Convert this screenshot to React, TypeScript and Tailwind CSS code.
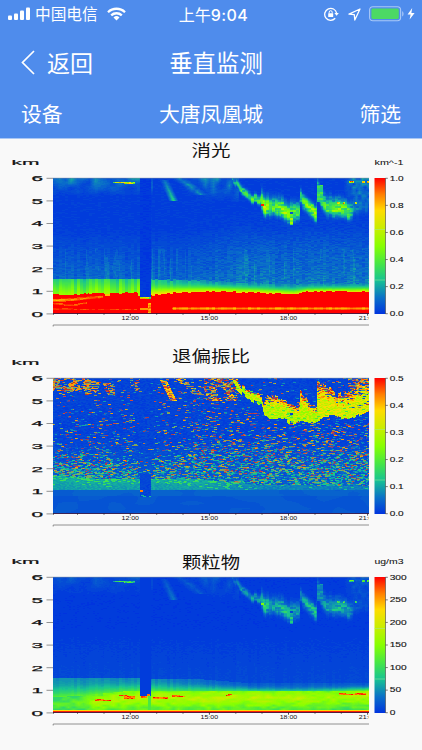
import { useMemo } from 'react'

type Kind = 'extinction' | 'depol' | 'particle'

type ChartProps = {
  kind: Kind
  title: string
  titleY: number
  titleWidth: number
  unit?: string
  ticks: string[]
  height: number
}

const PLOT_X = 53
const PLOT_Y = 39
const PLOT_W = 316
const PLOT_H = 136
const LEVELS = 64

// blue -> teal -> green -> yellow -> red
const STOPS: [number, number[]][] = [
  [0, [0, 52, 222]],
  [0.12, [10, 112, 200]],
  [0.25, [24, 196, 145]],
  [0.37, [70, 230, 70]],
  [0.5, [135, 255, 0]],
  [0.63, [200, 238, 0]],
  [0.76, [255, 220, 0]],
  [0.88, [255, 125, 0]],
  [1, [255, 0, 0]],
]

// averaged colours of isolated noisy samples, returned by a field as 2 + index
const MUTED = ['#4a48a8', '#7c4482', '#a93a4c', '#d0483a', '#b97a42', '#8a9a50', '#6fb268', '#3f9f8c', '#d8a030', '#c8341c']
const muted = (i: number) => 2 + i

function color(v: number) {
  const c = Math.max(0, Math.min(1, v))
  let i = 1
  while (i < STOPS.length - 1 && STOPS[i][0] < c) i++
  const [a, ca] = STOPS[i - 1]
  const [b, cb] = STOPS[i]
  const k = (c - a) / (b - a)
  return `rgb(${ca.map((n, j) => Math.round(n + (cb[j] - n) * k)).join(',')})`
}

function rnd(x: number, y: number, seed: number) {
  let h = (x * 374761393 + y * 668265263 + seed * 982451653) | 0
  h = Math.imul(h ^ (h >>> 13), 1274126177)
  h = Math.imul(h ^ (h >>> 16), 2246822519)
  return ((h ^ (h >>> 14)) >>> 0) / 4294967296
}

function smooth(x: number, y: number, seed: number) {
  const xi = Math.floor(x)
  const yi = Math.floor(y)
  const fx = x - xi
  const fy = y - yi
  const a = rnd(xi, yi, seed) * (1 - fx) + rnd(xi + 1, yi, seed) * fx
  const b = rnd(xi, yi + 1, seed) * (1 - fx) + rnd(xi + 1, yi + 1, seed) * fx
  return a * (1 - fy) + b * fy
}

function lerp(points: number[][], x: number) {
  if (x <= points[0][0]) return points[0][1]
  for (let i = 1; i < points.length; i++) {
    if (x <= points[i][0]) {
      const [x0, y0] = points[i - 1]
      const [x1, y1] = points[i]
      return y0 + ((y1 - y0) * (x - x0)) / (x1 - x0 || 1)
    }
  }
  return points[points.length - 1][1]
}

const CLOUD_TOP = [[179, 0], [184, 2], [188, 8], [198, 13], [208, 17], [210, 24], [214, 16], [224, 20], [234, 25], [246, 27], [247, 14], [257, 24], [263, 29], [264, 3], [273, 8], [284, 17], [298, 13], [306, 3], [316, 0]]
const CLOUD_BOTTOM = [[179, 2], [183, 10], [194, 20], [208, 27], [211, 35], [215, 39], [224, 39], [233, 42], [240, 46], [247, 42], [262, 44], [264, 42], [269, 39], [282, 38], [296, 41], [304, 36], [316, 32]]
// bright core of the cloud: centre line and strength
const CORE = [[179, 0], [182, 4], [188, 13], [198, 20], [206, 22], [213, 30], [220, 27], [230, 34], [238, 35], [246, 35], [247, 19], [255, 27], [263, 34], [264, 12], [268, 23], [273, 29], [281, 31], [296, 33], [304, 30], [316, 26]]
const CORE_GAIN = [[179, 0.18], [188, 0.36], [205, 0.44], [211, 0.62], [220, 0.4], [230, 0.56], [245, 0.4], [248, 0.34], [262, 0.66], [264, 0.3], [272, 0.4], [282, 0.5], [295, 0.44], [301, 0.16], [316, 0.1]]

function streak(x: number, y: number, x0: number, y0: number, x1: number, y1: number, w: number) {
  if (y < y0 || y > y1) return 0
  const cx = x0 + ((x1 - x0) * (y - y0)) / (y1 - y0)
  return Math.max(0, 1 - Math.abs(x - cx) / w)
}

const inGap = (x: number) => x >= 87 && x < 98

function cloudCore(x: number, y: number) {
  if (x < 179) return 0
  const col = Math.floor(x / 3)
  const row = Math.floor(y / 2)
  const q = rnd(col, row, 9)
  if (x >= 208 && x < 211 && row === 13) return 0.97
  if (x >= 237 && x < 240 && (y === 34 || y === 35)) return 0.06
  if (x >= 237 && x < 240 && y > 39 && y < 47) return 0.38 + q * 0.25
  const c = lerp(CORE, x) + (rnd(col, 1, 8) - 0.5) * 4
  const w = y < c ? (x < 208 ? 5 : x > 246 && x < 263 ? 7 : 11) : x < 208 ? 4 : 8
  const d = Math.abs(y - c) / w
  const body = Math.exp(-d * d * 1.3) * lerp(CORE_GAIN, x)
  const v = body * (0.62 + 0.6 * q)
  // right after 19:00 the cloud reappears at a sharp edge
  if (x >= 264 && x < 270 && y > 6 && y < 24) return Math.max(v, 0.24 + q * 0.14)
  return v
}

function upperHaze(x: number, y: number) {
  let v = 0
  if (x < 100) v += 0.13 * Math.max(0, 1 - y / 18) * smooth(x / 6, y / 5, 2) * 1.5
  if (x > 130 && x < 186) v += 0.15 * Math.min(1, (x - 130) / 30) * Math.max(0, 1 - y / 25) * smooth(x / 4, y / 7, 3) * 1.5
  if (x > 290) v += 0.26 * Math.min(1, (x - 290) / 12) * Math.max(0, 1 - y / 38) * smooth(x / 3, y / 3, 4)
  v += streak(x, y, 111, 2, 120, 22, 5) * (0.08 + y / 110)
  v += streak(x, y, 126, 0, 147, 16, 8) * 0.11 * (0.6 + smooth(x / 3, y / 2, 41))
  return v
}

function sparks(x: number, y: number) {
  if (y >= 4 && y < 6 && x >= 60 && x < 82) return y < 5 || x > 70 ? 0.3 + rnd(Math.floor(x / 2), y, 4) * 0.6 : 0
  if (y >= 3 && y < 5 && ((x >= 296 && x < 301) || (x > 308 && x < 312) || x > 313)) return 0.4 + rnd(x, y, 5) * 0.6
  if (y >= 24 && y < 26 && ((x > 283 && x < 287) || (x > 289 && x < 292) || (x > 301 && x < 304))) return 0.35 + rnd(x, y, 6) * 0.6
  return 0
}

function extinction(x: number, y: number) {
  const col = Math.floor(x / 3)
  const n = rnd(Math.floor(x / 3), y, 11)
  const stripe = rnd(col, 0, 12)
  const gap = inGap(x)
  if (gap && y < 119) return n * 0.02
  const redTop = (x < 85 ? lerp([[0, 116], [28, 116], [44, 114], [56, 115], [85, 114]], x) : lerp([[98, 117], [112, 115], [158, 113], [205, 114], [240, 116], [255, 113], [316, 113]], x)) + (stripe - 0.5) * 1.6
  if (y >= redTop || gap) {
    if (y >= 135) return 1
    if (gap) return y < 121 ? 0.3 + n * 0.7 : x > 94 && y > 124 ? 0.78 + n * 0.15 : y > 129 && y < 132 ? 0.84 : 1
    if (x < 50) {
      const k = Math.abs(y - lerp([[0, 122], [20, 121], [50, 118]], x))
      if (k < 1.6) return 0.77 + k * 0.07 + n * 0.08 + x / 600
    }
    if (x < 34) {
      const k = Math.abs(y - lerp([[0, 125], [20, 127], [34, 124]], x))
      if (k < 1) return 0.88 + n * 0.1
    }
    if (x < 20 && Math.abs(y - 130) < 1) return 0.88 + n * 0.1
    if (x >= 52 && x < 57 && y < 118) return 0.8
    if (x > 118 && y >= 129 && y < 132) return (y === 130 ? 0.79 : 0.87) + stripe * 0.1
    if (x < 85 && y === 131) return 0.9 + stripe * 0.1
    return 1
  }
  if (x < 87 && y >= 101) return 0.29 + ((y - 101) / 13) * 0.19 + (stripe - 0.5) * 0.16
  const start = lerp([[98, 101], [150, 102], [185, 104], [240, 106], [316, 105]], x) + (stripe - 0.5) * 1.5
  if (y >= start) {
    const k = (y - start) / (redTop - start)
    return lerp([[98, 0.26], [160, 0.18]], x) + k * k * 0.52 + (stripe - 0.5) * 0.1
  }
  const low = Math.max(0, (y - 50) / 52)
  let v = 0.008 + n * 0.02 + low * (0.04 + n * 0.035 + stripe * 0.045)
  v += lerp([[130, 0], [185, 1]], x) * lerp([[32, 0], [70, 0.028], [102, 0.025]], y) * (0.6 + n)
  if (y > 70 && smooth(x / 3, y / 30, 45) > 0.75) v += 0.035
  v += upperHaze(x, y)
  return Math.max(v, cloudCore(x, y), sparks(x, y))
}

function depol(x: number, y: number) {
  // samples come as short horizontal dashes, offset row by row
  const shift = Math.floor(rnd(0, y, 40) * 3)
  const n = rnd(Math.floor((x + shift) / 2), y, 21)
  const m = rnd(Math.floor((x + shift) / 3), y, 22)
  const col = Math.floor(x / 3)
  const gap = inGap(x)
  if (y >= 135) return muted(1)
  if (gap && y > 95 && y < 119) return x < 90 && (y === 112 || y === 113) ? 0.88 : 0.02 + n * 0.03 + (y > 116 && m > 0.7 ? 0.2 : 0)
  if (y >= 112) return 0.08 - (y > 117 ? 0.018 : 0) + smooth(x / 15, y / 5, 3) * 0.015
  const top = lerp(CLOUD_TOP, x) + (rnd(col, 1, 23) - 0.5) * 5
  const bottom = lerp(CLOUD_BOTTOM, x) + (rnd(col, 2, 24) - 0.5) * 4
  if (x >= 237 && x < 240 && y > 34 && y < 37) return 0.02
  if (x > 179 && y >= top && y <= bottom) {
    const edge = (y - top) / (bottom - top)
    if (x > 294 && m < 0.6 - (y / 55)) return n < 0.5 ? 0.04 : muted(Math.floor(n * 9.9))
    if (edge < 0.3 && m < 0.22) return n < 0.5 ? 0.08 : muted(1)
    if (m > 0.95) return 0.38
    const side = x > 264 ? 0.06 : 0
    if (edge < 0.2) return n < 0.3 ? muted(9) : n < 0.6 ? muted(8) : 0.62 + m * 0.3
    if (edge < 0.42) return 0.56 + side + n * 0.28
    return 0.5 + side + n * 0.2
  }
  if (streak(x, y, 110, 2, 120, 22, 4) > 0.2 && m > 0.15) return n < 0.3 ? muted(3) : n < 0.6 ? muted(8) : 0.62 + n * 0.2
  if (streak(x, y, 126, 0, 145, 16, 6) > 0.15 && m > 0.4) return n < 0.7 ? muted(3 + Math.floor(n * 8)) : 0.8
  const cluster = smooth(x / 7, y / 5, 28)
  if (y < 17 && ((x < 34 && y < 13) || (x >= 32 && x < 62 && y > (x - 30) / 6)) && m < cluster * 1.15) {
    return n < 0.8 ? muted(2 + Math.floor(n * 9.9)) : 0.72 + n * 0.14
  }
  if (x > 76 && x < 87 && y < 13 && m < 0.35) return muted(Math.floor(n * 9.9))
  if (x > 150 && x < 184 && y < 23 && m < cluster * 1.1) return n < 0.85 ? muted(Math.floor(n * 11.7)) : 0.8
  if (x > 294 && y < 36 && m < 0.5) return muted(Math.floor(n * 9.9))

  // teal layer just above 1 km, thinner in the afternoon
  const layer = lerp([[0, 97], [50, 101], [150, 101], [200, 106], [316, 108]], x)
  if (y >= layer) {
    const base = lerp([[0, 0.19], [150, 0.18], [200, 0.13], [316, 0.12]], x)
    const speck = x < 200 ? 0.7 + (y - layer) * 0.03 : 0.95
    return base + n * 0.05 - (y - layer) * 0.002 + (m > speck ? 0.13 : 0)
  }
  const density = x < 60
    ? lerp([[0, 0.07], [45, 0.13], [70, 0.28], [85, 0.6], [97, 0.9]], y)
    : x < 140
      ? lerp([[0, 0.08], [60, 0.14], [80, 0.3], [92, 0.6], [101, 0.85]], y)
      : lerp([[0, 0.06], [45, 0.2], [65, 0.4], [80, 0.6], [104, 0.75]], y)
  const d = x > 84 && x < 101 ? density * 0.4 : density
  if (m < d) {
    const hot = lerp([[0, 0.35], [50, 0.5], [72, 0.3], [90, 0.17], [104, 0.05]], y)
    const k = rnd(Math.floor((x + shift) / 3), y, 26)
    if (n < hot) return k < 0.88 ? muted(Math.floor(k * 5.6)) : 0.85
    if (k > 0.88) return muted(6)
    if (k > 0.8) return muted(5)
    return 0.05 + rnd(Math.floor((x + shift) / 2), y, 27) * (y > 75 ? 0.23 : 0.16)
  }
  return 0.01 + n * 0.04 + (y > 60 ? (y - 60) / 900 : 0)
}

// [x from, x to, y, thickness]
const HOT = [[42, 51, 122, 2], [51, 58, 123, 1], [66, 75, 118, 1], [71, 82, 119, 3], [88, 94, 119, 2], [94, 97, 117, 2], [100, 108, 120, 2], [108, 115, 120, 2], [119, 127, 118, 2], [127, 132, 119, 1], [173, 177, 118, 1], [175, 179, 117, 1], [286, 293, 116, 2], [293, 302, 117, 1], [302, 313, 116, 2]]

function particle(x: number, y: number) {
  const n = rnd(Math.floor(x / 2), y, 31)
  const stripe = rnd(Math.floor(x / 3), 0, 12)
  const gap = inGap(x)
  if (y >= 134) return 0.97
  if (y >= 133) return 0.75
  for (const [a, b, hy, t] of HOT) {
    if (x >= a && x < b && y >= hy && y < hy + t) return 0.84 + n * 0.16
  }
  if (gap && y < 119) return 0.01
  const start = lerp([[87, 101], [150, 102], [200, 106], [316, 106]], x)
  if (y >= start || gap) {
    const c = lerp([[0, 127], [28, 125], [70, 121], [100, 121], [180, 120], [250, 121], [316, 118]], x)
    if (!gap && (y < 114 || y < c - 7)) {
      const k = (y - start) / (c - 6 - start)
      return lerp([[0, 0.15], [98, 0.14], [150, 0.09], [200, 0.06]], x) + k * k * 0.27 + stripe * 0.035
    }
    const d = Math.abs(y - c)
    const peak = lerp([[0, 0.4], [25, 0.44], [45, 0.58], [158, 0.61], [258, 0.57], [270, 0.55], [316, 0.6]], x)
    const band = peak - d * 0.016 + (smooth(x / 5, y / 2, 36) - 0.5) * 0.12
    if (x < 50 && y < 119) return 0.42 + (stripe - 0.5) * 0.07
    return gap && x > 94 ? 0.38 : Math.max(0.32, band)
  }
  let v = 0.006 + n * 0.012 + Math.max(0, (y - 50) / 50) * (0.02 + stripe * 0.014)
  v += upperHaze(x, y) * 0.45
  return Math.max(v, cloudCore(x, y) * 0.5, sparks(x, y) * 0.5)
}

const FIELDS: Record<Kind, (x: number, y: number) => number> = { extinction, depol, particle }

function Heatmap({ kind }: { kind: Kind }) {
  // one path per colour level, neighbouring cells merged into runs
  const paths = useMemo(() => {
    const out: string[] = Array(LEVELS + 1 + MUTED.length).fill('')
    for (let y = 0; y < PLOT_H; y++) {
      let from = 0
      let last = -1
      for (let x = 0; x <= PLOT_W; x++) {
        let level = -1
        if (x < PLOT_W) {
          const v = FIELDS[kind](x, y)
          level = v >= 2 ? LEVELS + 1 + Math.min(MUTED.length - 1, v - 2) : Math.round(Math.max(0, Math.min(1, v)) * LEVELS)
        }
        if (level !== last) {
          if (last >= 0) out[last] += `M${from} ${y}h${x - from}v1h${from - x}z`
          from = x
          last = level
        }
      }
    }
    return out
  }, [kind])

  return (
    <g transform={`translate(${PLOT_X} ${PLOT_Y})`} shapeRendering="crispEdges">
      {paths.map((d, i) => d && <path key={i} d={d} fill={i > LEVELS ? MUTED[i - LEVELS - 1] : color(i / LEVELS)} />)}
    </g>
  )
}

function Chart({ kind, title, titleY, titleWidth, unit, ticks, height }: ChartProps) {
  const bottom = PLOT_Y + PLOT_H
  const hours = [53.5, 77.5, 104, 130.3, 156.7, 183, 209.4, 235.8, 262, 288.5, 315, 341.3, 367.6]
  return (
    <svg
      width="422"
      height={height}
      viewBox={`0 0 422 ${height}`}
      className="block shrink-0 overflow-visible font-['Liberation_Sans','Noto_Sans_CJK_SC',sans-serif]"
      fill="#111"
    >
      <defs>
        <linearGradient id={`bar-${kind}`} x1="0" y1="1" x2="0" y2="0">
          {STOPS.map(([o]) => <stop key={o} offset={o} stopColor={color(o)} />)}
        </linearGradient>
        <clipPath id={`clip-${kind}`}>
          <rect x="0" y={bottom} width="369" height="20" />
        </clipPath>
      </defs>

      <text x={211 - titleWidth / 2} y={titleY} fontSize="16" textLength={titleWidth} lengthAdjust="spacingAndGlyphs">{title}</text>
      <g stroke="#111" strokeWidth="0.15">
        <text x="11.5" y="26" fontSize="6.5" textLength="28" lengthAdjust="spacingAndGlyphs">km</text>
        {unit && <text x="374.5" y="26" fontSize="6.5" strokeWidth="0.05" textLength="29" lengthAdjust="spacingAndGlyphs">{unit}</text>}
      </g>

      <Heatmap kind={kind} />
      <path d={`M${PLOT_X} ${PLOT_Y + 0.2}h${PLOT_W}`} stroke="#6b83a8" strokeWidth="0.6" />
      <path d={`M${PLOT_X} ${bottom - 0.5}h${PLOT_W}`} stroke="#2a1a4a" strokeWidth="0.8" />

      {[6, 5, 4, 3, 2, 1, 0].map((n, i) => {
        const y = PLOT_Y + 0.3 + i * 22.6
        return (
          <g key={n}>
            <text x="31.5" y={y + 2.8} fontSize="8" stroke="#111" strokeWidth="0.25" textLength="11.5" lengthAdjust="spacingAndGlyphs">{n}</text>
            <path d={`M46.5 ${y}h6.5`} stroke="#777" strokeWidth="0.8" />
          </g>
        )
      })}

      {hours.map((x, i) => (
        <path key={x} d={`M${x} ${bottom - 0.5}v${i % 3 === 0 && i > 0 ? 2.2 : 1.2}`} stroke="#222" strokeWidth="0.8" />
      ))}
      <g clipPath={`url(#clip-${kind})`}>
        {['12:00', '15:00', '18:00', '21:00'].map((t, i) => (
          <text key={t} x={121.5 + i * 79.1} y="180.8" fontSize="4.8" textLength="17.5" lengthAdjust="spacingAndGlyphs">{t}</text>
        ))}
      </g>
      <path d="M53.2 187.5v-1.5h315.8" stroke="#777" strokeWidth="0.8" fill="none" />

      <rect x="374.5" y={PLOT_Y} width="11" height={PLOT_H} fill={`url(#bar-${kind})`} />
      <path d={`M374.5 ${PLOT_Y + 51.5}h11M374.5 ${PLOT_Y + 102}h11`} stroke="#a5e59a" strokeWidth="0.5" />
      <path d={`M385.5 ${PLOT_Y}v${PLOT_H}`} stroke="#444" strokeWidth="0.6" />
      {ticks.map((t, i) => {
        const y = PLOT_Y + 0.3 + (i * (PLOT_H - 0.6)) / (ticks.length - 1)
        const w = t.length === 3 ? (t.includes('.') ? 14 : 17) : t.length * 5.7
        return (
          <g key={t}>
            <path d={`M385.5 ${y}h2.3`} stroke="#444" strokeWidth="0.7" />
            <text x="389.7" y={y + 2.3} fontSize="6.4" stroke="#111" strokeWidth="0.1" textLength={w} lengthAdjust="spacingAndGlyphs">{t}</text>
          </g>
        )
      })}
    </svg>
  )
}

function StatusBar() {
  return (
    <div className="grid h-7 grid-cols-[1fr_auto_1fr] items-center pl-2 pr-[6px]">
      <div className="flex items-center">
        <svg width="22" height="14" viewBox="0 0 22 14" fill="white">
          <rect x="0" y="8.5" width="4" height="4.5" rx="1" />
          <rect x="6" y="6.5" width="4" height="6.5" rx="1" />
          <rect x="12" y="3.5" width="4" height="9.5" rx="1" />
          <rect x="18" y="0.5" width="4" height="12.5" rx="1" />
        </svg>
        <span className="ml-[5px] text-[15.7px] leading-none">中国电信</span>
        <svg className="ml-[9px]" width="19" height="14" viewBox="0 0 19 14" fill="none" stroke="white" strokeWidth="2.3">
          <path d="M1 5.2a12.2 12.2 0 0 1 17 0" />
          <path d="M4.2 8.4a7.6 7.6 0 0 1 10.6 0" />
          <path d="M9.5 13.4 6.5 10.5a4.3 4.3 0 0 1 6 0z" fill="white" stroke="none" />
        </svg>
      </div>
      <span className="pl-[3px] text-[16px] leading-none">上午<span className="font-['Inter'] text-[16px] font-medium tracking-[0.4px]">9:04</span></span>
      <div className="flex items-center justify-end">
        <svg width="15" height="14" viewBox="0 0 15 14" fill="none" stroke="white" strokeWidth="1.3">
          <path d="M11.2 11.3A6 6 0 1 1 12.6 6.2" />
          <path d="m10.4 6 2.2 2.8L14.8 6z" fill="white" stroke="none" />
          <rect x="4.2" y="6.2" width="5" height="3.8" rx="0.5" fill="white" stroke="none" />
          <path d="M5.2 6.4V5.2a1.5 1.5 0 0 1 3 0v1.2" strokeWidth="1" />
        </svg>
        <svg className="ml-[9px]" width="13" height="13" viewBox="0 0 13 13" fill="none" stroke="white" strokeWidth="1.3" strokeLinejoin="round">
          <path d="M12 1 1 6.2l5.3.5.5 5.3z" />
        </svg>
        <svg className="ml-2" width="47" height="16" viewBox="0 0 47 16">
          <rect x="0.6" y="0.8" width="31" height="14" rx="3.2" fill="none" stroke="#a9c8f7" strokeWidth="1.1" />
          <rect x="2.4" y="2.6" width="27.4" height="10.4" rx="1.4" fill="#4cd964" />
          <path d="M33.2 5.2c1.8.6 1.8 4.6 0 5.2z" fill="#a9c8f7" />
          <path d="M43.2 2 38.6 8.5h3L40.6 13.6 45.6 6.9h-3.2z" fill="white" />
        </svg>
      </div>
    </div>
  )
}

export default function App() {
  return (
    <div className="flex min-h-[750px] w-[422px] flex-col overflow-hidden bg-[#f9f9f9]">
      <header className="h-[139px] border-b border-[#a9c7f5] bg-[#4f8cec] font-['Noto_Sans_CJK_SC',sans-serif] text-white">
        <StatusBar />
        <div className="grid h-[69px] grid-cols-[1fr_auto_1fr] items-center pl-[21px] pr-[11px]">
          <div className="flex items-center">
            <svg width="14" height="25" viewBox="0 0 14 25" fill="none" stroke="white" strokeWidth="1.7">
              <path d="M13 1 1.5 12.5 13 24" />
            </svg>
            <span className="ml-3 text-[23px] leading-none">返回</span>
          </div>
          <h1 className="whitespace-nowrap text-[23.4px] leading-none">垂直监测</h1>
        </div>
        <div className="flex h-8 items-center justify-between pl-[21px] pr-[21px] text-[20.8px] leading-none">
          <span>设备</span>
          <span>大唐凤凰城</span>
          <span>筛选</span>
        </div>
      </header>
      <main className="flex flex-col">
        <Chart kind="extinction" title="消光" titleY={17} titleWidth={39} unit="km^-1" ticks={['1.0', '0.8', '0.6', '0.4', '0.2', '0.0']} height={200} />
        <Chart kind="depol" title="退偏振比" titleY={23} titleWidth={78} ticks={['0.5', '0.4', '0.3', '0.2', '0.1', '0.0']} height={199} />
        <Chart kind="particle" title="颗粒物" titleY={30} titleWidth={58} unit="ug/m3" ticks={['300', '250', '200', '150', '100', '50', '0']} height={199} />
      </main>
    </div>
  )
}
